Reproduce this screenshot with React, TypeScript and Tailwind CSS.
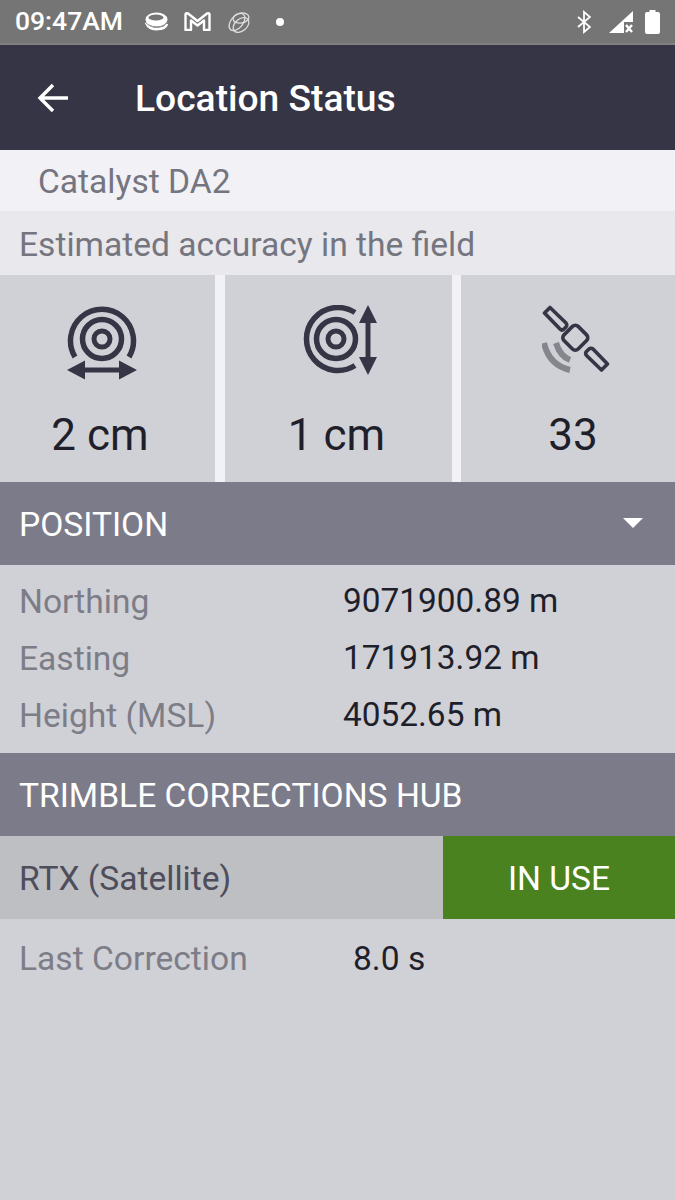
const Wide = () => (
  <svg width="70" height="75" viewBox="0 0 70 75" fill="none" stroke="#363545">
    <path d="M8 52 A31.5 31.5 0 1 1 62 52" strokeWidth="5.5" />
    <circle cx="35" cy="34" r="19.5" strokeWidth="5.5" />
    <circle cx="35" cy="34" r="8" strokeWidth="5" />
    <path d="M14 65 H56" strokeWidth="5" />
    <path d="M0 65 L18 55.5 V74.5 Z M70 65 L52 55.5 V74.5 Z" fill="#363545" stroke="none" />
  </svg>
);

const Tall = () => (
  <svg width="75" height="70" viewBox="0 0 75 70" fill="none" stroke="#363545">
    <path d="M53 7.5 A31.5 31.5 0 1 0 53 60.5" strokeWidth="5.5" />
    <circle cx="34" cy="34" r="19.5" strokeWidth="5.5" />
    <circle cx="34" cy="34" r="8" strokeWidth="5" />
    <path d="M66 14 V56" strokeWidth="5" />
    <path d="M66 0 L75 18 H57 Z M66 70 L57 52 H75 Z" fill="#363545" stroke="none" />
  </svg>
);

const Satellite = () => (
  <svg width="68" height="68" viewBox="0 0 68 68" fill="none">
    <g stroke="#363545" strokeWidth="3.6" strokeLinejoin="round">
      <path d="M8 2.5 L2.5 8 L18 24 Q20 26 22 24 L24 22 Q25.5 20 24 18 Z" />
      <rect x="23.3" y="22.7" width="20" height="20" rx="4" transform="rotate(45 33.3 32.7)" />
      <path d="M44 47 Q43 49 45 51 L59.5 65 L65.5 59 L51 44 Q49 42.5 47 44 Z" />
    </g>
    <g stroke="#85858d" strokeWidth="6">
      <path d="M2 38 Q7 60 28 65" />
      <path d="M14 38 Q18 51 28 55" />
    </g>
  </svg>
);

const stat = [
  { icon: <Wide />, value: "2 cm", iconClass: "mr-[11px]", valueClass: "mr-[15px]" },
  { icon: <Tall />, value: "1 cm", iconClass: "ml-[2px]", valueClass: "mr-[3px]" },
  { icon: <Satellite />, value: "33", iconClass: "ml-[15px]", valueClass: "ml-[10px]" },
];

const position = [
  { label: "Northing", value: "9071900.89 m" },
  { label: "Easting", value: "171913.92 m" },
  { label: "Height (MSL)", value: "4052.65 m" },
];

export default function App() {
  return (
    <div className="flex h-[1200px] w-[675px] flex-col overflow-hidden bg-[#d0d1d6] font-['Roboto',sans-serif]">
      {/* status bar */}
      <div className="flex h-[45px] items-center justify-between border-b-2 border-[#808080] bg-[#757575] pl-[15px] pr-[15px] text-white">
        <div className="flex items-center">
          <span className="w-[107px] whitespace-nowrap text-[26.5px] font-medium leading-none">09:47AM</span>
          <svg className="ml-[23px]" width="23" height="19" viewBox="0 0 23 19" fill="none">
            <ellipse cx="11.5" cy="7.5" rx="11" ry="7" fill="white" />
            <ellipse cx="11" cy="5.5" rx="7.5" ry="3" fill="#757575" />
            <path d="M1 10.5 C3 15.5 8 17.5 13 17 C18 17 21 15 22 12" stroke="white" strokeWidth="2.6" />
            <path d="M1 11 C4 14 8 15 12 15 C16 15 20 14 22.5 10" stroke="#9a9a9a" strokeWidth="1" />
          </svg>
          <svg className="ml-[16px]" width="27" height="19" viewBox="0 0 27 19" fill="none" stroke="white" strokeWidth="2.4">
            <path d="M1.5 18 V2.5 Q1.5 0.8 4 1.5 L13.5 9 L23 1.5 Q25.5 0.8 25.5 2.5 V18 H20 V8.5 L13.5 13.5 L7 8.5 V18 Z" strokeLinejoin="round" />
          </svg>
          <svg className="ml-[16px]" width="24" height="24" viewBox="0 0 24 24" fill="none" stroke="#dedede" strokeWidth="1.3">
            <ellipse cx="10" cy="12" rx="10" ry="6" transform="rotate(-50 10 12)" />
            <ellipse cx="14" cy="8" rx="8" ry="5" transform="rotate(-10 14 8)" />
            <ellipse cx="14" cy="15" rx="9" ry="6" transform="rotate(-40 14 15)" />
          </svg>
          <div className="ml-[25px] h-[8px] w-[8px] rounded-full bg-white" />
        </div>
        <div className="flex items-center">
          <svg width="14" height="24" viewBox="0 0 14 24" fill="none" stroke="white" strokeWidth="1.8">
            <path d="M1 7 L13 17 L7 22 V2 L13 7 L1 17" />
          </svg>
          <svg className="ml-[18px]" width="24" height="24" viewBox="0 0 24 24" fill="white">
            <path d="M0 23 L24 1 V12 H15 V23 Z" />
            <path d="M17 15 L23 22 M23 15 L17 22" stroke="white" strokeWidth="2.4" />
          </svg>
          <svg className="ml-[12px]" width="15" height="24" viewBox="0 0 15 24" fill="white">
            <path d="M4.5 0 H10.5 V2 H13 Q15 2 15 4 V22 Q15 24 13 24 H2 Q0 24 0 22 V4 Q0 2 2 2 H4.5 Z" />
          </svg>
        </div>
      </div>

      {/* app bar */}
      <div className="flex h-[105px] items-center bg-[#363545] text-white">
        <svg className="ml-[37px]" width="32" height="30" viewBox="0 0 32 30" fill="none" stroke="white" strokeWidth="3.4">
          <path d="M31 15 H3 M16 2 L3 15 L16 28" />
        </svg>
        <h1 className="ml-[66px] pt-[3px] text-[37.2px] font-medium leading-none">Location Status</h1>
      </div>

      <div className="flex h-[61px] items-center bg-[#f1f1f6] pl-[38px] pt-[4px] text-[33.6px] text-[#75757f]">Catalyst DA2</div>
      <div className="flex h-[64px] items-center bg-[#e8e8ed] pl-[19px] pt-[4px] text-[33.6px] text-[#75757f]">
        Estimated accuracy in the field
      </div>

      {/* stats */}
      <div className="grid h-[207px] grid-cols-[215px_227px_214px] gap-x-[9.5px] bg-[#f1f1f6]">
        {stat.map(s => (
          <div key={s.value} className="flex flex-col items-center bg-[#d0d1d6]">
            <div className={`mt-[30px] flex h-[75px] items-start ${s.iconClass}`}>{s.icon}</div>
            <div className={`mt-[25px] text-[44px] leading-[60px] text-[#1f1f2b] ${s.valueClass}`}>{s.value}</div>
          </div>
        ))}
      </div>

      <div className="flex h-[83px] items-center justify-between bg-[#7c7b89] pl-[19px] pr-[32px] pt-[4px] text-[33.6px] text-white">
        <span>POSITION</span>
        <div className="mb-[6px] h-0 w-0 border-x-[10px] border-t-[10px] border-x-transparent border-t-white" />
      </div>

      <div className="flex h-[188px] flex-col py-[7px]">
        {position.map(p => (
          <div key={p.label} className="flex h-[57px] items-center pt-[4px] text-[33.6px]">
            <span className="w-[343px] pl-[19px] text-[#7d7d87]">{p.label}</span>
            <span className="mb-[2px] text-[33.4px] text-[#1f1f2b]">{p.value}</span>
          </div>
        ))}
      </div>

      <div className="flex h-[83px] items-center bg-[#7c7b89] pl-[19px] pt-[4px] text-[33.6px] text-white">
        TRIMBLE CORRECTIONS HUB
      </div>

      <div className="flex h-[83px] items-center bg-[#bebfc3] text-[33.6px]">
        <span className="flex-1 pl-[19px] pt-[4px] text-[#4e4d5c]">RTX (Satellite)</span>
        <div className="flex h-full w-[232px] items-center justify-center bg-[#4b8220] pt-[4px] text-white">IN USE</div>
      </div>

      <div className="flex h-[79px] items-center pt-[2px] text-[33.6px]">
        <span className="w-[353px] pl-[19px] text-[#7d7d87]">Last Correction</span>
        <span className="text-[#1f1f2b]">8.0 s</span>
      </div>
    </div>
  );
}
